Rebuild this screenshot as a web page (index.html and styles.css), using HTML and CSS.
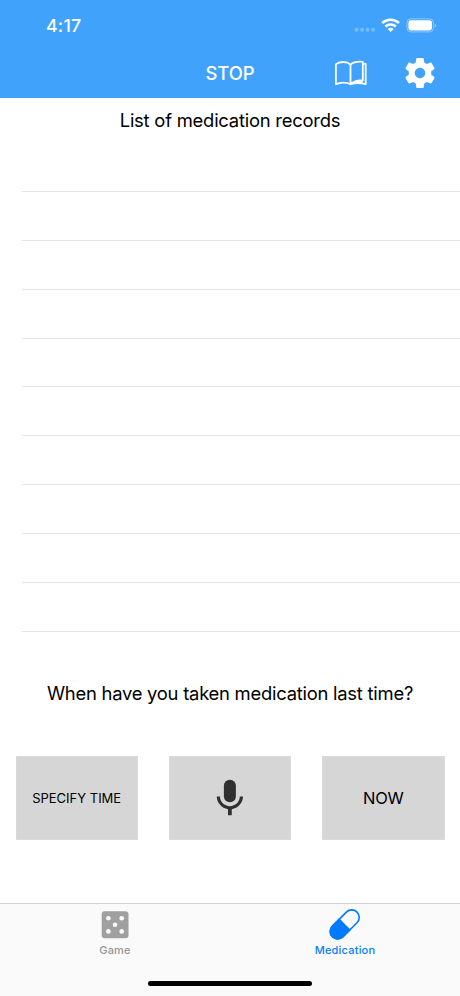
FILE: index.html
```html
<!DOCTYPE html>
<html lang="en">
<head>
<meta charset="utf-8">
<title>Medication</title>
<link rel="stylesheet" href="styles.css">
</head>
<body>
<div class="app">
  <header class="header">
    <div class="status">
      <span class="clock">4:17</span>
      <svg class="status-icons" width="84" height="16" viewBox="0 0 84 16" fill="#fff">
        <g opacity=".28"><circle cx="2.6" cy="12.8" r="2"/><circle cx="8.1" cy="12.8" r="2"/><circle cx="13.6" cy="12.8" r="2"/><circle cx="19.1" cy="12.8" r="2"/></g>
        <g fill="none" stroke="#fff" stroke-width="2.7"><path d="M28.2 6a12.5 12.5 0 0 1 16.8 0"/><path d="M31.4 9.5a7.8 7.8 0 0 1 10.4 0"/></g>
        <path d="M33.6 12a4.5 4.5 0 0 1 6 0L36.6 15z"/>
        <rect x="53" y="1.9" width="26.4" height="13" rx="3.8" fill="none" stroke="#fff" stroke-opacity=".42"/>
        <rect x="54.4" y="3.3" width="23.6" height="10.2" rx="2.4"/>
        <path d="M80.8 6.5v4.4c1.7-.7 1.7-3.7 0-4.4z" opacity=".5"/>
      </svg>
    </div>
    <nav class="nav">
      <span></span>
      <span class="stop">STOP</span>
      <span class="actions">
        <svg class="book" width="34" height="26" viewBox="0 0 34 26" fill="none" stroke="#fff" stroke-width="1.8" stroke-linejoin="round" stroke-linecap="round">
          <path d="M16.5 4.6C13 1.2 6 1.2 1.9 4.2V24.2C6 22.2 12.5 22 16.5 24.2C20 21.2 24.5 20.2 28.8 20.2V1.8C24 1.4 19.5 2 16.5 4.6V24"/>
          <path d="M29 3.9h2.7v20.3C26.8 22.8 20.5 22.8 16.7 24.2"/>
          <path d="M17.5 23.6C21 21 25 20.3 28.8 20.2V22.6C24.5 22.2 20.5 22.6 17.5 23.6z" fill="#fff" stroke="none"/>
        </svg>
        <svg class="gear" width="36" height="36" viewBox="0 0 24 24" fill="#fff"><path d="M19.43 12.98c.04-.32.07-.64.07-.98s-.03-.66-.07-.98l2.11-1.65c.19-.15.24-.42.12-.64l-2-3.46c-.12-.22-.39-.3-.61-.22l-2.49 1c-.52-.4-1.08-.73-1.69-.98l-.38-2.65A.488.488 0 0 0 14 2h-4c-.25 0-.46.18-.49.42l-.38 2.65c-.61.25-1.17.59-1.69.98l-2.49-1c-.23-.09-.49 0-.61.22l-2 3.46c-.13.22-.07.49.12.64l2.11 1.65c-.04.32-.07.65-.07.98s.03.66.07.98l-2.11 1.65c-.19.15-.24.42-.12.64l2 3.46c.12.22.39.3.61.22l2.49-1c.52.4 1.08.73 1.69.98l.38 2.65c.03.24.24.42.49.42h4c.25 0 .46-.18.49-.42l.38-2.65c.61-.25 1.17-.59 1.69-.98l2.49 1c.23.09.49 0 .61-.22l2-3.46c.12-.22.07-.49-.12-.64l-2.11-1.65zM12 15.5c-1.93 0-3.5-1.57-3.5-3.5s1.57-3.5 3.5-3.5 3.5 1.57 3.5 3.5-1.57 3.5-3.5 3.5z"/></svg>
      </span>
    </nav>
  </header>
  <main class="main">
    <h1 class="title">List of medication records</h1>
    <ul class="records">
      <li></li><li></li><li></li><li></li><li></li><li></li><li></li><li></li><li></li><li></li>
    </ul>
    <p class="question">When have you taken medication last time?</p>
    <div class="buttons">
      <button class="btn small">SPECIFY TIME</button>
      <button class="btn" aria-label="Record">
        <svg width="45" height="45" viewBox="-.2 -.5 24 24" fill="#303030"><rect x="8.8" y="2" width="6.4" height="12" rx="3.1"/><path d="M17.3 11c0 3-2.54 5.1-5.3 5.1S6.7 14 6.7 11H5c0 3.41 2.72 6.23 6 6.72V21h2v-3.28c3.28-.48 6-3.3 6-6.72h-1.7z"/></svg>
      </button>
      <button class="btn now">NOW</button>
    </div>
  </main>
  <footer class="footer">
    <div class="tabs">
      <div class="tab">
        <svg width="36" height="36" viewBox="0 0 36 36"><rect x="4.7" y="4.2" width="26.8" height="27" rx="3" fill="#a0a0a0"/><g fill="#fafafa"><circle cx="11.4" cy="11.2" r="2.3"/><circle cx="24.7" cy="11.2" r="2.3"/><circle cx="18" cy="17.8" r="2.3"/><circle cx="11.4" cy="24.4" r="2.3"/><circle cx="24.7" cy="24.4" r="2.3"/></g></svg>
        <span>Game</span>
      </div>
      <div class="tab active">
        <svg width="36" height="36" viewBox="0 0 36 36"><g transform="rotate(45 17.7 17.4)"><rect x="10.2" y="0" width="15" height="34.8" rx="7.5" fill="#fafafa" stroke="#007aff" stroke-width="1.6"/><path d="M9.4 17h16.6v10.3a8.3 8.3 0 0 1-16.6 0z" fill="#007aff"/></g></svg>
        <span>Medication</span>
      </div>
    </div>
    <div class="home"></div>
  </footer>
</div>
</body>
</html>
```

FILE: styles.css
```css
* { box-sizing: border-box; }
body { margin: 0; background: #fff; font-family: Inter, "Liberation Sans", sans-serif; color: #000; }
.app { width: 460px; height: 996px; display: flex; flex-direction: column; overflow: hidden; }
svg { display: block; flex: none; }
.header { height: 98px; background: #40a2fa; color: #fff; }
.status { height: 50px; padding: 2px 22px 0 46px; display: flex; justify-content: space-between; align-items: center; }
.clock { font-size: 17.8px; font-weight: 550; letter-spacing: 0.2px; line-height: 20px; }
.status-icons { margin: -3px 0 0; }
.nav { height: 48px; display: grid; grid-template-columns: 1fr auto 1fr; align-items: center; }
.stop { margin-top: -2px; font-size: 18.4px; font-weight: 550; line-height: 24px; }
.actions { display: flex; align-items: center; justify-content: flex-end; gap: 34px; padding-right: 22px; }
.book { margin-top: -2px; }
.gear { margin-top: -2px; }
.main { height: 805px; }
.title { margin: 0; height: 45px; font-size: 18.4px; font-weight: 400; line-height: 44px; letter-spacing: -0.22px; text-align: center; }
.records { list-style: none; margin: 0 0 0 22px; padding: 0; }
.records li { height: 48.88px; border-bottom: 1px solid #e5e5e5; }
.question { margin: 48px 0 0; font-size: 18.4px; line-height: 26px; letter-spacing: -0.24px; text-align: center; }
.buttons { margin-top: 50.4px; padding: 0 15.5px; display: grid; grid-template-columns: repeat(3, 1fr); gap: 31px; }
.btn { height: 83.4px; padding: 0; border: 1px solid #dadada; background: #d6d6d6; color: #000; display: flex; align-items: center; justify-content: center; font-family: inherit; font-size: 16.5px; letter-spacing: -0.2px; white-space: nowrap; }
.small { font-size: 13px; letter-spacing: 0; }
.footer { height: 93px; background: #fafafa; border-top: 1px solid #d2d2d2; display: flex; flex-direction: column; align-items: center; }
.tabs { width: 100%; display: grid; grid-template-columns: 1fr 1fr; }
.tab { height: 79px; padding-top: 3px; display: flex; flex-direction: column; align-items: center; color: #969696; font-size: 11px; font-weight: 500; line-height: 14px; letter-spacing: 0.2px; }
.active { color: #087eff; }
.home { width: 164px; height: 5px; border-radius: 3px; background: #000; margin-top: -2px; }
```
